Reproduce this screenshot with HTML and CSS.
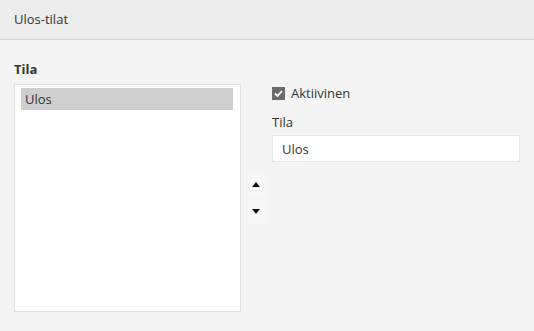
FILE: index.html
```html
<!DOCTYPE html>
<html lang="fi">
<head>
    <meta charset="UTF-8">
    <title>Ulos-tilat</title>
    <link rel="stylesheet" href="styles.css">
</head>
<body>
    <div class="header">Ulos-tilat</div>

    <div class="content">
        <div class="list-label">Tila</div>
        <div class="row">
            <div class="listbox">
                <div class="item selected">Ulos</div>
            </div>

            <div class="order">
                <button class="btn-order" title="Ylös">
                    <svg width="8" height="5" viewBox="0 0 8 5"><path d="M0 5 L4 0 L8 5 Z" fill="#111"/></svg>
                </button>
                <button class="btn-order" title="Alas">
                    <svg width="8" height="5" viewBox="0 0 8 5"><path d="M0 0 L8 0 L4 5 Z" fill="#111"/></svg>
                </button>
            </div>

            <div class="details">
                <label class="check">
                    <span class="box">
                        <svg width="9" height="7" viewBox="0 0 9 7"><path d="M1 3.5 L3.5 6 L8 1" fill="none" stroke="#fff" stroke-width="1.8"/></svg>
                    </span>
                    Aktiivinen
                </label>
                <label class="field-label" for="tila">Tila</label>
                <input type="text" id="tila" value="Ulos">
            </div>
        </div>
    </div>
</body>
</html>
```

FILE: styles.css
```css
body {
    margin: 0;
    font-family: "Open Sans", Arial, sans-serif;
    font-size: 13px;
    color: #333;
    background-color: #f4f4f4;
}

.header {
    height: 40px;
    line-height: 38px;
    padding: 0 14px;
    background-color: #ececec;
    border-bottom: 1px solid #d2d2d2;
    box-sizing: border-box;
}

.content {
    padding: 20px 14px 0 14px;
}

.list-label {
    font-weight: bold;
    line-height: 18px;
    margin-bottom: 6px;
}

.row {
    display: flex;
}

.listbox {
    width: 227px;
    height: 228px;
    box-sizing: border-box;
    background-color: #fff;
    border: 1px solid #e2e2e2;
    padding: 3px 7px 0 6px;
}

.item {
    height: 22px;
    line-height: 22px;
    padding-left: 4px;
}

.item.selected {
    background-color: #cecece;
}

.order {
    display: flex;
    flex-direction: column;
    justify-content: center;
    gap: 3px;
    margin-left: 4px;
}

.btn-order {
    width: 22px;
    height: 24px;
    padding: 0;
    border: none;
    background-color: #f6f6f7;
    display: flex;
    align-items: center;
    justify-content: center;
}

.details {
    margin-left: 5px;
    width: 248px;
    display: flex;
    flex-direction: column;
}

.check {
    display: flex;
    align-items: center;
    height: 18px;
}

.box {
    width: 13px;
    height: 13px;
    background-color: #6b6b6b;
    display: flex;
    align-items: center;
    justify-content: center;
    margin-right: 6px;
}

.field-label {
    margin-top: 11px;
    line-height: 18px;
}

input {
    margin-top: 4px;
    height: 27px;
    box-sizing: border-box;
    width: 100%;
    border: 1px solid #e6e6e6;
    background-color: #fff;
    font-family: "Open Sans", Arial, sans-serif;
    font-size: 13px;
    color: #333;
    padding: 0 9px;
    outline: none;
}
```
